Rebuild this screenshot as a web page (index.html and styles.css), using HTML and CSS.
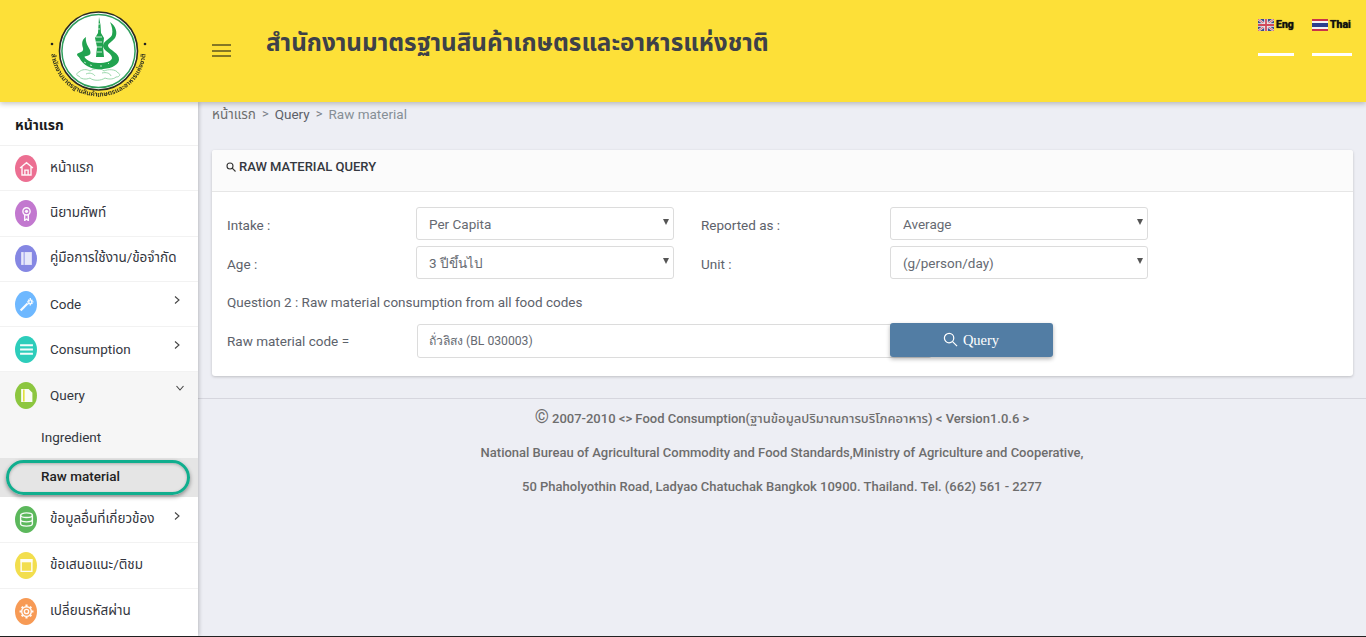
FILE: index.html
```html
<!DOCTYPE html>
<html lang="th">
<head>
<meta charset="utf-8">
<title>Food Consumption</title>
<link rel="stylesheet" href="styles.css">
</head>
<body>
<div class="page">
  <header class="topbar">
    <svg class="logo" viewBox="30 0 130 102" width="130" height="102" aria-label="logo">
      <defs>
        <path id="arc" d="M51 49 A47.500 47.500 0 0 0 146 49"/>
      </defs>
      <circle cx="98.500" cy="51" r="39" fill="#fff" stroke="#2b2a20" stroke-width="1.600"/>
      <circle cx="98.500" cy="51" r="36.600" fill="none" stroke="#2e9e5b" stroke-width="1.500"/>
      <g fill="none" stroke="#8fd3a2" stroke-width=".9">
        <path d="M79 72c3-3 8-3 11-1 4-3 11-3 14 0 4-2 12-2 14 2 3 1 2 4-2 4-3 3-9 2-11 1-4 3-12 3-15 0-4 2-10 1-11-2-3 0-3-3 0-4z"/>
        <path d="M86 74c4-2 8 0 9 2M102 73c4-1 8 0 9 3"/>
      </g>
      <path d="M99 17l1.500 8 .5 8 3 5-1 9 1 10-8 0 1-10-2-9 3-5 .5-8z" fill="#21a34f"/>
      <path d="M96 37h6M96 42h6M97 47h5M97 52h5M98 24h2M98 29h2" stroke="#fff" stroke-width=".8" fill="none"/>
      <path d="M110 22C116 26 118 33 115 38 112 42 108 43 108 46 109 50 120 53 119 60 118 67 106 70 96 69 88 68 81 63 78 55L83 54C85 60 91 63 98 63 106 63 112 61 112 58 112 53 103 51 103 46 103 41 110 39 112 35 113 31 112 26 110 22Z" fill="#21a34f"/>
      <path d="M86 37C81 40 82 45 83 48 84 52 80 52 77 54 77 57 80 58 84 57 88 55 92 56 90 50 88 46 85 42 86 37Z" fill="#21a34f"/>
      <path d="M84 62l2 1M90 65l2 .5M100 66h2M108 64l1-1" stroke="#fff" stroke-width=".7" fill="none"/>
      <circle cx="52" cy="44" r="1.300" fill="#222"/>
      <circle cx="145" cy="44" r="1.300" fill="#222"/>
      <text class="logo-text"><textPath href="#arc" startOffset="50%" text-anchor="middle">สำนักงานมาตรฐานสินค้าเกษตรและอาหารแห่งชาติ</textPath></text>
    </svg>
    <button class="burger" type="button" aria-label="menu"><span></span><span></span><span></span></button>
    <h1 class="site-title">สำนักงานมาตรฐานสินค้าเกษตรและอาหารแห่งชาติ</h1>
    <nav class="langs">
      <a class="lang lang-en">
        <svg class="flag" viewBox="0 0 16 12" width="16" height="12"><rect width="16" height="12" fill="#3d4f86"/><path d="M0 0l16 12M16 0L0 12" stroke="#e8d8dc" stroke-width="2.400"/><path d="M0 0l16 12M16 0L0 12" stroke="#cf4a5f" stroke-width=".8"/><path d="M8 0v12M0 6h16" stroke="#eee" stroke-width="3.600"/><path d="M8 0v12M0 6h16" stroke="#d04a5c" stroke-width="1.800"/></svg>
        <b>Eng</b>
      </a>
      <a class="lang lang-th">
        <svg class="flag" viewBox="0 0 16 12" width="16" height="12"><rect width="16" height="12" fill="#c8344a"/><rect y="2" width="16" height="8" fill="#f4f4f4"/><rect y="4" width="16" height="4" fill="#2d3f8e"/></svg>
        <b>Thai</b>
      </a>
    </nav>
  </header>
  <div class="body-row">
    <aside class="sidebar">
      <div class="side-title">หน้าแรก</div>
      <ul class="menu">
        <li class="item"><span class="ic c-pink"><svg viewBox="0 0 14 14"><path d="M1 6.500L7 1.500l6 5M2.800 5.500V13h8.400V5.500M5.500 13V8.500h3V13" /></svg></span><span class="lbl">หน้าแรก</span></li>
        <li class="item"><span class="ic c-purple"><svg viewBox="0 0 14 14"><circle cx="7" cy="5" r="3.400"/><circle class="solid" cx="7" cy="5" r="1.500"/><path d="M5.300 8v5.500l1.700-1.300 1.700 1.300V8"/></svg></span><span class="lbl">นิยามศัพท์</span></li>
        <li class="item"><span class="ic c-indigo"><svg viewBox="0 0 14 14"><path class="solid" d="M2 1h10v12H2z" opacity=".85"/><path class="cut" d="M4.800 1v12" /></svg></span><span class="lbl">คู่มือการใช้งาน/ข้อจำกัด</span></li>
        <li class="item"><span class="ic c-blue"><svg viewBox="0 0 14 14"><path class="thick" d="M1.500 12.500L8 6"/><path d="M10.500 1v2.500M10.500 5.500V8M7.500 4.500H10M11 4.500h2.500M8.500 2.500l1.200 1.200M12.500 2.500l-1.200 1.200M8.500 6.500l1.200-1.200M12.500 6.500l-1.200-1.200"/></svg></span><span class="lbl">Code</span><svg class="chev" viewBox="0 0 8 10"><path d="M2 1.500L6 5 2 8.500"/></svg></li>
        <li class="item"><span class="ic c-teal"><svg viewBox="0 0 14 14"><path class="thick" d="M1 3h12M1 7h12M1 11h12"/></svg></span><span class="lbl">Consumption</span><svg class="chev" viewBox="0 0 8 10"><path d="M2 1.500L6 5 2 8.500"/></svg></li>
        <li class="item item-open"><span class="ic c-lime"><svg viewBox="0 0 14 14"><path class="solid" d="M2 1h7l3.500 3.500V13H2z"/><path class="yellow" d="M4.500 1.500v11"/></svg></span><span class="lbl">Query</span><svg class="chev chev-down" viewBox="0 0 10 8"><path d="M1.500 2L5 6l3.500-4"/></svg></li>
        <li class="sub sub-plain">Ingredient</li>
        <li class="sub sub-active">Raw material<span class="ring"></span></li>
        <li class="item item-last"><span class="ic c-green"><svg viewBox="0 0 14 14"><ellipse cx="7" cy="3" rx="5.500" ry="2.200"/><path d="M1.500 3v8c0 1.200 2.500 2.200 5.500 2.200s5.500-1 5.500-2.200V3M1.500 7c0 1.200 2.500 2.200 5.500 2.200s5.500-1 5.500-2.200"/></svg></span><span class="lbl">ข้อมูลอื่นที่เกี่ยวข้อง</span><svg class="chev" viewBox="0 0 8 10"><path d="M2 1.500L6 5 2 8.500"/></svg></li>
        <li class="item item-last"><span class="ic c-yellow"><svg viewBox="0 0 14 14"><path class="solid" d="M1.500 1h11v3h-11z"/><path d="M2 1.500h10v11H2z" /></svg></span><span class="lbl">ข้อเสนอแนะ/ติชม</span></li>
        <li class="item item-last"><span class="ic c-orange"><svg viewBox="0 0 14 14"><circle cx="7" cy="7" r="2"/><circle cx="7" cy="7" r="4.500"/><path class="thick" d="M7 .5v2M7 11.500v2M.5 7h2M11.500 7h2M2.500 2.500l1.300 1.300M10.200 10.200l1.300 1.300M2.500 11.500l1.300-1.300M10.200 3.800l1.300-1.300"/></svg></span><span class="lbl">เปลี่ยนรหัสผ่าน</span></li>
      </ul>
    </aside>
    <main class="content">
      <div class="crumbs"><span class="cr-link">หน้าแรก</span><span class="cr-sep">&gt;</span><span class="cr-q">Query</span><span class="cr-sep">&gt;</span><span class="cr-cur">Raw material</span></div>
      <section class="card">
        <div class="card-head">
          <svg class="head-ic" viewBox="0 0 10 10" width="10" height="10"><circle cx="4" cy="4" r="3"/><path d="M6.200 6.200L9.500 9.500"/></svg>
          <span>RAW MATERIAL QUERY</span>
        </div>
        <div class="card-body">
          <div class="form-grid">
            <label class="f-label">Intake :</label>
            <div class="sel"><select><option>Per Capita</option></select></div>
            <label class="f-label f-label2">Reported as :</label>
            <div class="sel"><select><option>Average</option></select></div>
            <label class="f-label">Age :</label>
            <div class="sel"><select><option>3 ปีขึ้นไป</option></select></div>
            <label class="f-label f-label2">Unit :</label>
            <div class="sel"><select><option>(g/person/day)</option></select></div>
          </div>
          <p class="question">Question 2 : Raw material consumption from all food codes</p>
          <div class="code-row">
            <label class="f-label code-label">Raw material code =</label>
            <input class="code-input" type="text" value="ถั่วลิสง (BL 030003)">
            <button class="query-btn" type="button">
              <svg viewBox="0 0 16 16" width="15" height="15"><circle cx="6.500" cy="6.500" r="5"/><path d="M10.200 10.200L15 15"/></svg>
              <span>Query</span>
            </button>
          </div>
        </div>
      </section>
      <footer class="foot">
        <p class="foot-1"><span class="copy">©</span> 2007-2010 &lt;&gt; Food Consumption(ฐานข้อมูลปริมาณการบริโภคอาหาร) &lt; Version1.0.6 &gt;</p>
        <p>National Bureau of Agricultural Commodity and Food Standards,Ministry of Agriculture and Cooperative,</p>
        <p>50 Phaholyothin Road, Ladyao Chatuchak Bangkok 10900. Thailand. Tel. (662) 561 - 2277</p>
      </footer>
    </main>
  </div>
</div>
</body>
</html>
```
FILE: styles.css
```css
* { box-sizing: border-box; }
html, body { margin: 0; height: 100%; overflow: hidden; }
body {
  font-family: Roboto, "Noto Sans", "Noto Sans Thai", sans-serif;
  font-size: 14px;
  color: #6b6f78;
  background: #edeef4;
}
.page {
  height: 637px;
  display: flex;
  flex-direction: column;
  border-bottom: 1px solid #222;
}
.topbar {
  height: 102px;
  flex: none;
  display: flex;
  align-items: flex-start;
  background: #fde038;
  padding-left: 30px;
  position: relative;
  z-index: 3;
  box-shadow: 0 2px 5px rgba(0,0,0,.22);
}
.logo { flex: none; display: block; filter: blur(.3px); }
.logo-text { font-size: 6.700px; font-weight: 700; fill: #3a3a20; }
.burger {
  margin: 44px 0 0 52px;
  width: 19px;
  height: 13px;
  padding: 0;
  border: 0;
  background: none;
  display: flex;
  flex-direction: column;
  justify-content: space-between;
  flex: none;
}
.burger span { display: block; height: 2px; background: #857824; }
.site-title {
  margin: 25px 0 0 35px;
  font-size: 24.250px;
  line-height: 36px;
  font-weight: 700;
  color: #3e4149;
  white-space: nowrap;
}
.langs {
  margin-left: auto;
  margin-right: 14px;
  display: flex;
  gap: 18px;
  padding-top: 19px;
}
.lang {
  display: flex;
  align-items: flex-start;
  height: 37px;
  gap: 2px;
  border-bottom: 3px solid #fff;
  font-size: 10.500px;
  line-height: 12px;
  color: #111;
}
.lang-en { width: 36px; }
.lang-th { width: 40px; }
.lang b { text-shadow: 0 0 1px #000; }
.flag { display: block; flex: none; }
.body-row { flex: 1; display: flex; min-height: 0; }
.sidebar {
  width: 198px;
  flex: none;
  background: #fff;
  box-shadow: 1px 0 4px rgba(0,0,0,.22);
  position: relative;
  z-index: 2;
}
.side-title {
  height: 44px;
  padding: 13px 0 0 15px;
  font-weight: 700;
  font-size: 14px;
  line-height: 20px;
  color: #1d1d1d;
  border-bottom: 1px solid #f1f1f1;
}
.menu { list-style: none; margin: 0; padding: 0; }
.item {
  height: 45.300px;
  display: flex;
  align-items: center;
  padding-left: 15px;
  border-bottom: 1px solid #f2f2f2;
  color: #33363e;
  font-size: 13.500px;
  position: relative;
}
.lbl { padding-bottom: 1px; }
.item-last { height: 46px; }
.item-last:last-child { border-bottom: 0; }
.item-open { height: 45.500px; background: #f6f6f6; border-bottom: 0; }
.ic {
  width: 22px;
  height: 27px;
  border-radius: 50%;
  flex: none;
  display: flex;
  align-items: center;
  justify-content: center;
  margin-right: 13px;
}
.ic svg { width: 15px; height: 15px; fill: none; stroke: #fff; stroke-width: 1.300; opacity: .95; }
.ic .solid { fill: #fff; stroke: none; }
.ic .thick { stroke-width: 2; }
.ic .cut { stroke: #8587e3; stroke-width: .8; }
.ic .yellow { stroke: #e7e23d; stroke-width: 1.500; }
.c-pink { background: #ec6f92; }
.c-purple { background: #c278cf; }
.c-indigo { background: #8587e3; }
.c-blue { background: #6eb8ff; }
.c-teal { background: #2dcdbb; }
.c-lime { background: #8cc63f; }
.c-green { background: #5cb85c; }
.c-yellow { background: #f2de4e; }
.c-orange { background: #f79a55; }
.chev {
  position: absolute;
  left: 173px;
  top: 13px;
  width: 8px;
  height: 10px;
  fill: none;
  stroke: #444;
  stroke-width: 1.100;
}
.item-last .chev { top: 14px; }
.chev-down { left: 175px; top: 12px; width: 10px; height: 8px; }
.sub {
  padding-left: 41px;
  font-size: 13.500px;
  color: #33363e;
  position: relative;
}
.sub-plain { height: 40px; line-height: 39px; background: #f6f6f6; }
.sub-active {
  height: 39px;
  line-height: 37px;
  background: #e5e5e5;
  font-weight: 500;
  color: #222;
}
.ring {
  position: absolute;
  left: 6px;
  top: 2px;
  width: 184px;
  height: 35px;
  border: 3px solid #10ae8e;
  border-radius: 18px;
  box-shadow: 0 2px 4px rgba(0,0,0,.4), inset 0 1px 3px rgba(0,0,0,.25);
}
.content { flex: 1; min-width: 0; padding-top: 0; }
.crumbs {
  height: 48px;
  padding: 2px 0 0 14px;
  line-height: 20px;
  font-size: 13.500px;
  display: flex;
  align-items: flex-start;
  color: #868e96;
}
.cr-link { color: #6e6e6e; }
.cr-q { color: #5c6068; }
.cr-sep { margin: 0 6px; color: #7a7f87; font-size: 13px; }
.card {
  margin: 0 13px 0 14px;
  background: #fff;
  border-radius: 3px;
  box-shadow: 0 1px 3px rgba(0,0,0,.2);
  height: 226px;
}
.card-head {
  height: 42px;
  display: flex;
  align-items: center;
  gap: 3px;
  padding: 0 0 8px 14px;
  background: #fbfbfb;
  border-bottom: 1px solid #e6e6e6;
  border-radius: 3px 3px 0 0;
  font-weight: 500;
  font-size: 13px;
  color: #353840;
}
.head-ic { fill: none; stroke: #333; stroke-width: 1.100; }
.card-body { padding: 15px 15px 0; }
.form-grid {
  display: grid;
  grid-template-columns: 189px 258px 216px 258px;
  grid-auto-rows: 33px;
  row-gap: 6px;
}
.f-label { font-size: 13.500px; line-height: 36px; color: #5d626b; }
.f-label2 { padding-left: 27px; }
.sel { position: relative; }
.sel::after {
  content: "";
  position: absolute;
  right: 5px;
  top: 12px;
  border: 3.500px solid transparent;
  border-top: 6px solid #555;
  border-bottom: 0;
}
.sel select {
  appearance: none;
  width: 100%;
  height: 33px;
  padding: 0 12px;
  border: 1px solid #dcdcdc;
  border-radius: 3px;
  background: #fff;
  font: 13.500px Roboto, "Noto Sans", sans-serif;
  color: #666a72;
  outline: 0;
}
.question {
  margin: 0;
  padding-top: 13px;
  height: 44px;
  line-height: 20px;
  font-size: 13.500px;
  color: #5d626b;
}
.code-row { display: flex; align-items: flex-start; }
.code-label { width: 190px; line-height: 36px; flex: none; }
.code-input {
  width: 515px;
  height: 34px;
  margin-top: 1px;
  padding: 0 11px 2px;
  border: 1px solid #dcdcdc;
  border-radius: 3px;
  font: 12.200px Roboto, "Noto Sans", sans-serif;
  color: #666a72;
  flex: none;
  outline: 0;
}
.query-btn {
  margin-left: -42px;
  width: 163px;
  height: 34px;
  flex: none;
  display: flex;
  align-items: center;
  justify-content: center;
  gap: 5px;
  border: 0;
  border-radius: 3px;
  background: #527da4;
  color: #fff;
  font: 14.500px "Liberation Serif", serif;
  box-shadow: 0 2px 4px rgba(0,0,0,.3);
  padding: 0 1px 0 0;
  position: relative;
}
.query-btn svg { fill: none; stroke: #fff; stroke-width: 1.300; margin-bottom: 2px; }
.foot {
  margin-top: 22px;
  border-top: 1px solid #d6d6de;
  text-align: center;
  font-weight: 500;
  font-size: 13px;
  color: #6d6d6d;
  padding-top: 9px;
}
.foot p { margin: 0; height: 34px; line-height: 22px; }
.copy { font-size: 18px; font-weight: 400; line-height: 16px; }
```
